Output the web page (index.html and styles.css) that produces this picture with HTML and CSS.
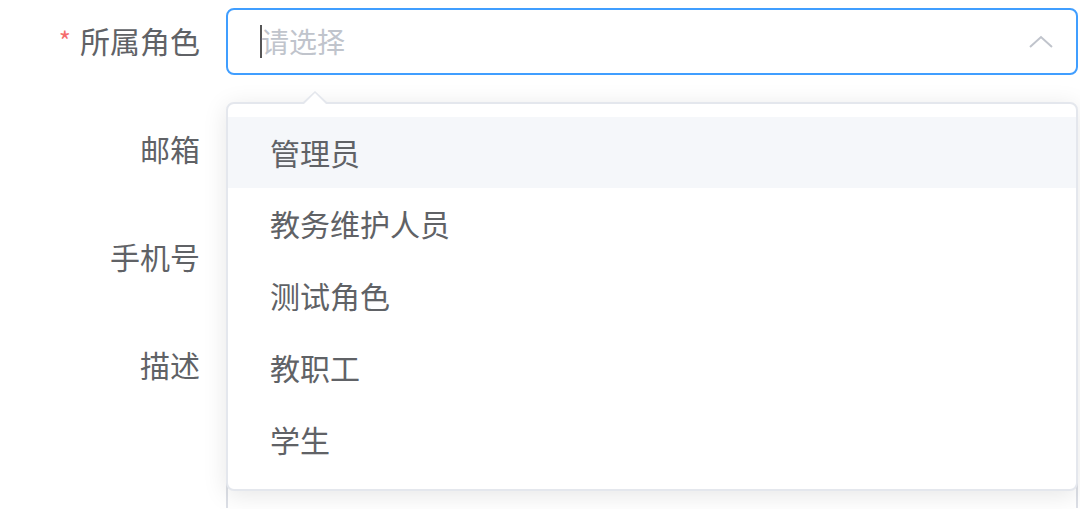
FILE: index.html
```html
<!DOCTYPE html>
<html lang="zh">
<head>
<meta charset="utf-8">
<link rel="stylesheet" href="styles.css">
</head>
<body>
<div class="page">
<form class="form">
  <div class="row">
    <label class="label"><span class="req">*</span>所属角色</label>
    <div class="control">
      <div class="select is-focus">
        <span class="caret"></span><span class="placeholder">请选择</span>
        <svg class="chev" width="26" height="16" viewBox="0 0 26 16"><path d="M2 13 L13 3 L24 13" fill="none" stroke="#c0c4cc" stroke-width="2"/></svg>
      </div>
    </div>
  </div>
  <div class="row">
    <label class="label">邮箱</label>
    <div class="control"><div class="input"></div></div>
  </div>
  <div class="row">
    <label class="label">手机号</label>
    <div class="control"><div class="input"></div></div>
  </div>
  <div class="row">
    <label class="label">描述</label>
    <div class="control"><div class="textarea"></div></div>
  </div>
</form>
<div class="dropdown">
  <span class="arrow"></span>
  <ul class="list">
    <li class="item hover">管理员</li>
    <li class="item">教务维护人员</li>
    <li class="item">测试角色</li>
    <li class="item">教职工</li>
    <li class="item">学生</li>
  </ul>
</div>
</div>
</body>
</html>
```
FILE: styles.css
```css
* { box-sizing: border-box; }
html, body { margin: 0; padding: 0; background: #fff; overflow: hidden; }
body {
  font-family: "Noto Sans CJK SC", "Noto Sans", sans-serif;
  color: #606266;
}
.page {
  width: 1080px;
  height: 509px;
  overflow: hidden;
  position: relative;
}
.form { padding-top: 8px; }
.row {
  display: flex;
  align-items: flex-start;
  margin-bottom: 41px;
}
.label {
  width: 226px;
  padding-right: 26px;
  height: 67px;
  display: flex;
  align-items: center;
  justify-content: flex-end;
  font-size: 30px;
  color: #606266;
  padding-bottom: 4px;
}
.req { color: #f56c6c; margin-right: 9px; font-size: 26px; }
.control { flex: 1; margin-right: 2px; }
.select, .input {
  height: 67px;
  border: 2px solid #dcdfe6;
  border-radius: 8px;
  display: flex;
  align-items: center;
  padding-left: 32px;
  position: relative;
}
.select.is-focus { border-color: #409eff; }
.caret {
  display: inline-block;
  width: 2px;
  height: 33px;
  background: #555;
}
.placeholder { font-size: 28px; color: #c0c4cc; margin-left: -1px; padding-bottom: 2px; }
.chev { position: absolute; right: 22px; top: 24px; }
.textarea {
  height: 176px;
  border: 2px solid #dcdfe6;
  border-bottom: 0;
  border-radius: 8px 8px 0 0;
}
.dropdown {
  position: absolute;
  left: 226px;
  top: 102px;
  width: 852px;
  height: 389px;
  background: #fff;
  border: 2px solid #e4e7ed;
  border-radius: 8px;
  box-shadow: 0 4px 24px rgba(0, 0, 0, 0.1);
}
.arrow {
  position: absolute;
  left: 74px;
  top: -13px;
  width: 0; height: 0;
  border-left: 13px solid transparent;
  border-right: 13px solid transparent;
  border-bottom: 12px solid #e4e7ed;
}
.arrow::after {
  content: "";
  position: absolute;
  left: -11px;
  top: 2px;
  border-left: 11px solid transparent;
  border-right: 11px solid transparent;
  border-bottom: 11px solid #fff;
}
.list { list-style: none; margin: 0; padding: 13px 0; }
.item {
  height: 72px;
  line-height: 70px;
  padding-left: 42px;
  font-size: 30px;
  color: #606266;
}
.item.hover { background: #f5f7fa; height: 71px; }
```
